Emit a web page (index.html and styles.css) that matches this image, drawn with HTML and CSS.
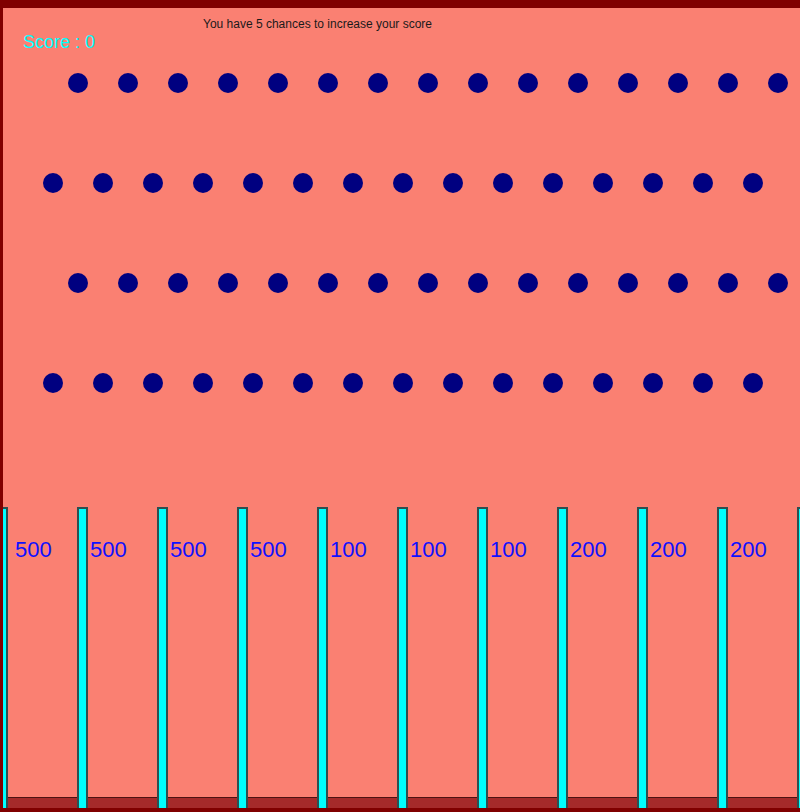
FILE: index.html
```html
<!DOCTYPE html>
<html lang="en">
<head>
  <meta charset="UTF-8">
  <title>Plinko</title>
  <link rel="stylesheet" href="styles.css">
</head>
<body>

  <div class="board">
    <p class="message">You have 5 chances to increase your score</p>
    <p class="score">Score : 0</p>

    <div class="pegs">
      <div class="row row-odd">
        <span class="peg"></span><span class="peg"></span><span class="peg"></span><span class="peg"></span><span class="peg"></span>
        <span class="peg"></span><span class="peg"></span><span class="peg"></span><span class="peg"></span><span class="peg"></span>
        <span class="peg"></span><span class="peg"></span><span class="peg"></span><span class="peg"></span><span class="peg"></span>
      </div>
      <div class="row row-even">
        <span class="peg"></span><span class="peg"></span><span class="peg"></span><span class="peg"></span><span class="peg"></span>
        <span class="peg"></span><span class="peg"></span><span class="peg"></span><span class="peg"></span><span class="peg"></span>
        <span class="peg"></span><span class="peg"></span><span class="peg"></span><span class="peg"></span><span class="peg"></span>
      </div>
      <div class="row row-odd">
        <span class="peg"></span><span class="peg"></span><span class="peg"></span><span class="peg"></span><span class="peg"></span>
        <span class="peg"></span><span class="peg"></span><span class="peg"></span><span class="peg"></span><span class="peg"></span>
        <span class="peg"></span><span class="peg"></span><span class="peg"></span><span class="peg"></span><span class="peg"></span>
      </div>
      <div class="row row-even">
        <span class="peg"></span><span class="peg"></span><span class="peg"></span><span class="peg"></span><span class="peg"></span>
        <span class="peg"></span><span class="peg"></span><span class="peg"></span><span class="peg"></span><span class="peg"></span>
        <span class="peg"></span><span class="peg"></span><span class="peg"></span><span class="peg"></span><span class="peg"></span>
      </div>
    </div>

    <div class="slots">
      <div class="slot first"><span class="divider"></span><span class="points">500</span></div>
      <div class="slot"><span class="divider"></span><span class="points">500</span></div>
      <div class="slot"><span class="divider"></span><span class="points">500</span></div>
      <div class="slot"><span class="divider"></span><span class="points">500</span></div>
      <div class="slot"><span class="divider"></span><span class="points">100</span></div>
      <div class="slot"><span class="divider"></span><span class="points">100</span></div>
      <div class="slot"><span class="divider"></span><span class="points">100</span></div>
      <div class="slot"><span class="divider"></span><span class="points">200</span></div>
      <div class="slot"><span class="divider"></span><span class="points">200</span></div>
      <div class="slot"><span class="divider"></span><span class="points">200</span></div>
      <div class="slot"><span class="divider"></span></div>
    </div>
  </div>

</body>
</html>
```

FILE: styles.css
```css
html, body {
  height: 100%;
}

body {
  margin: 0;
  background: #800000;
  font-family: "Liberation Sans", Arial, sans-serif;
  overflow: hidden;
}

.board {
  margin: 8px 0 0 3px;
  height: 800px;
  background: #fa8072;
  overflow: hidden;
  display: flex;
  flex-direction: column;
  padding-top: 9px;
  box-sizing: border-box;
}

.message {
  margin: 0 0 0 200px;
  font-size: 12px;
  line-height: 14px;
  color: #1a1a1a;
}

.score {
  margin: 1px 0 0 20px;
  font-size: 18px;
  line-height: 20px;
  color: #00ffff;
}

.pegs {
  margin-top: 21px;
  display: flex;
  flex-direction: column;
  gap: 80px;
}

.row {
  display: flex;
  gap: 30px;
}

.row-odd {
  padding-left: 65px;
}

.row-even {
  padding-left: 40px;
}

.peg {
  width: 20px;
  height: 20px;
  border-radius: 50%;
  background: #000080;
  flex-shrink: 0;
}

.slots {
  margin-top: 114px;
  margin-left: -6px;
  height: 301px;
  display: flex;
  background: linear-gradient(to bottom,
    transparent 290px,
    #4d1212 290px, #4d1212 291px,
    #a52a2a 291px);
}

.slot {
  width: 80px;
  flex-shrink: 0;
  display: flex;
}

.divider {
  width: 7px;
  background: #00ffff;
  border: 2px solid #2f4f4f;
  border-bottom: none;
}

.points {
  margin-left: 2px;
  padding-top: 30px;
  font-size: 22px;
  line-height: 26px;
  color: #1010ff;
}

.first .points {
  margin-left: 7px;
}
```
